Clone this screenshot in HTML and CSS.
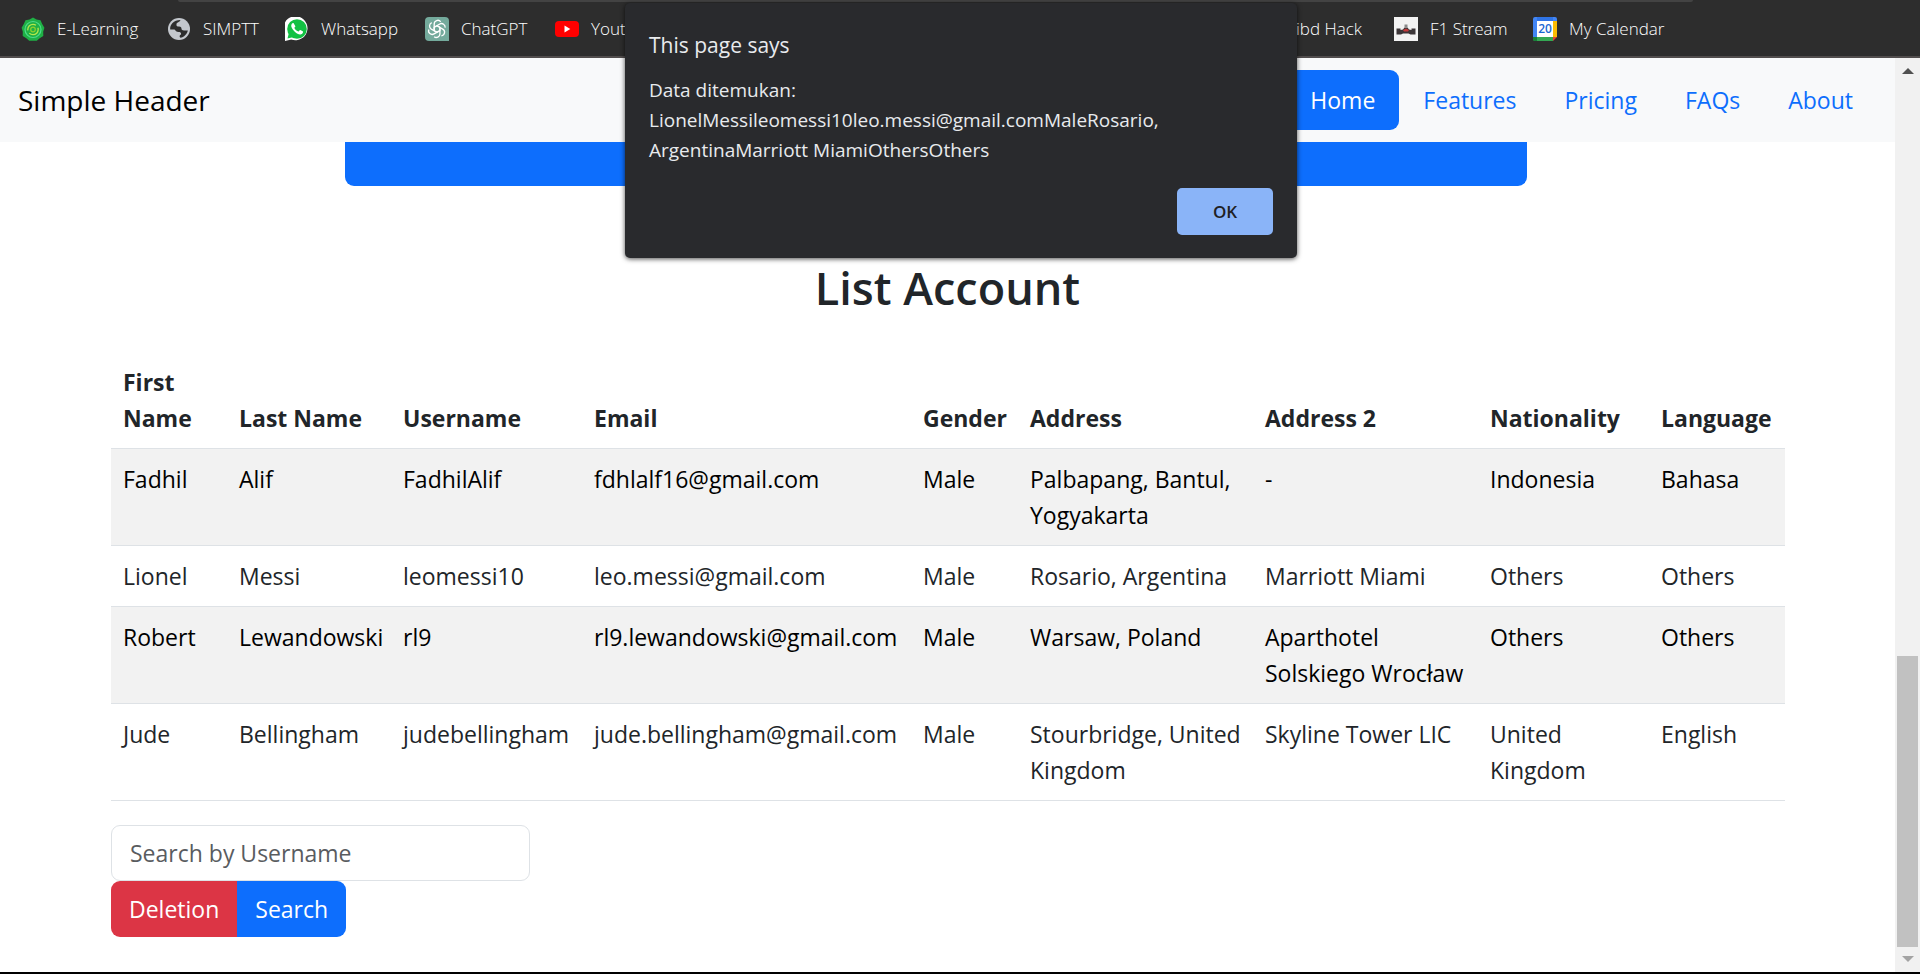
FILE: index.html
```html
<!DOCTYPE html>
<html lang="en">
<head>
<meta charset="utf-8">
<meta name="viewport" content="width=device-width, initial-scale=1">
<title>List Account</title>
<link rel="stylesheet" href="styles.css">
</head>
<body>
<div class="browser">
  <div class="address-edge"></div>
  <nav class="bookmarks" aria-label="Bookmarks">
    <a class="bookmark" href="#">
      <svg class="bookmark-icon" viewBox="0 0 24 24" aria-hidden="true">
        <path d="M12 0.500l3.500 2 4 .8 1.700 3.800 2.200 3.600-1.200 4 .1 4.200-3.600 2.300-2.900 2.600H8.200l-2.900-2.600-3.600-2.300.1-4.200-1.200-4 2.200-3.600 1.700-3.800 4-.8z" fill="#1fb045"/>
        <circle cx="12" cy="12.500" r="8" fill="none" stroke="#4ddc8a" stroke-width="1.200"/>
        <circle cx="12" cy="12.500" r="5.200" fill="none" stroke="#b5e84a" stroke-width="1.300" stroke-dasharray="12 3"/>
        <circle cx="12" cy="12.500" r="2.300" fill="none" stroke="#8ccf2c" stroke-width="1.200"/>
      </svg>
      <span>E-Learning</span>
    </a>
    <a class="bookmark" href="#">
      <svg class="bookmark-icon" viewBox="0 0 24 24" aria-hidden="true">
        <circle cx="12" cy="12" r="11" fill="#c3c7cd"/>
        <path d="M13.500 3c-1 2.500-3.500 2-4 4-.4 2 .5 2.500 2.500 2.500s2.500 1 2.500 2.500 2 1.500 4 1.500h2.300c-.8 3.800-3.800 6.700-7.300 7.300-1.500-.8-1-2.800.5-3.300.5-2-1-2.500-2.500-2.500-2 0-3-1.500-4-2.500H3.200C2.700 8 6.500 3 13.500 3z" fill="#2d2d2d"/>
      </svg>
      <span>SIMPTT</span>
    </a>
    <a class="bookmark" href="#">
      <svg class="bookmark-icon" viewBox="0 0 24 24" aria-hidden="true">
        <path d="M0 24V17A12 12 0 1 1 6.200 22.400z" fill="#fff"/>
        <circle cx="12" cy="12" r="9.800" fill="#12c143"/>
        <path d="M2.500 21.500l1.300-5.200 3.800 3.900z" fill="#12c143"/>
        <path d="M8.800 6.400c-.3-.6-1.300-.5-1.800.1-1.500 1.700-.7 4 1 6.200 2 2.600 4.300 4.300 6.900 4.700 1.500.2 3.200-.9 3.200-2.700 0-.4-2.700-1.700-3-1.600-.7.200-1 1.500-1.500 1.500-1.700-.4-3.500-2-4.200-3.600 0-.6 1-1.100 1-1.700z" fill="#fff"/>
      </svg>
      <span>Whatsapp</span>
    </a>
    <a class="bookmark" href="#">
      <svg class="bookmark-icon" viewBox="0 0 24 24" aria-hidden="true">
        <path d="M4 0h16a4 4 0 0 1 4 4v20H4a4 4 0 0 1-4-4V4a4 4 0 0 1 4-4z" fill="#74aa9c"/>
        <g fill="none" stroke="#fff" stroke-width="1.300" stroke-linejoin="round">
          <g id="knot">
            <path d="M9.200 13.600V7a3.600 3.600 0 0 1 6.500-2.200"/>
            <path d="M9.200 10.300l5.600-3.300a3.600 3.600 0 0 1 5.300 3.600"/>
          </g>
          <use href="#knot" transform="rotate(120 12 12)"/>
          <use href="#knot" transform="rotate(240 12 12)"/>
          <path d="M12 8.700l2.900 1.600v3.400L12 15.300l-2.900-1.600v-3.400z"/>
        </g>
      </svg>
      <span>ChatGPT</span>
    </a>
    <a class="bookmark" href="#">
      <svg class="bookmark-icon" viewBox="0 0 24 24" aria-hidden="true">
        <rect x="0" y="4" width="24" height="16" rx="4" fill="#f00"/>
        <path d="M9.500 8.500v7l5.800-3.500z" fill="#fff"/>
      </svg>
      <span>Youtube</span>
    </a>
    <a class="bookmark" href="#">
      <svg class="bookmark-icon" viewBox="0 0 24 24" aria-hidden="true"><rect width="24" height="24" fill="#1e7b85"/></svg>
      <span>Scribd Hack</span>
    </a>
    <a class="bookmark" href="#">
      <svg class="bookmark-icon" viewBox="0 0 24 24" aria-hidden="true">
        <rect width="24" height="24" fill="#f3f3f3"/>
        <path d="M2.500 11.500h4v1.500l2.500-.5 1.500-2h3l1.500 2 2.500.5v-1.500h4v6h-5l-2-1H9l-2 1H2.500z" fill="#3c3638"/>
        <rect x="10.500" y="7.500" width="3" height="3" fill="#8a8a8a"/>
        <path d="M9 13l3-1.500 3 1.500-1 1.500h-4z" fill="#c4393b"/>
      </svg>
      <span>F1 Stream</span>
    </a>
    <a class="bookmark" href="#">
      <svg class="bookmark-icon" viewBox="0 0 24 24" aria-hidden="true">
        <path d="M2 0h20a2 2 0 0 1 2 2v3H4v15H0V2a2 2 0 0 1 2-2z" fill="#4285f4"/>
        <path d="M4 0h16v4H4z" fill="#2f74e6"/>
        <path d="M20 4h4v16h-4z" fill="#fbbc04"/>
        <path d="M0 20h20v4H2a2 2 0 0 1-2-2z" fill="#34a853"/>
        <path d="M0 20h4v4H2a2 2 0 0 1-2-2z" fill="#188038"/>
        <path d="M20 20h4l-4 4z" fill="#ea4335"/>
        <rect x="4" y="4" width="16" height="16" fill="#fff"/>
        <text class="calendar-day" x="12" y="16" text-anchor="middle">20</text>
      </svg>
      <span>My Calendar</span>
    </a>
  </nav>

  <div class="viewport">
    <div class="page">
      <header class="site-header">
        <a class="brand" href="#">Simple Header</a>
        <nav class="site-nav" aria-label="Main">
          <a class="nav-link active" href="#" aria-current="page">Home</a>
          <a class="nav-link" href="#">Features</a>
          <a class="nav-link" href="#">Pricing</a>
          <a class="nav-link" href="#">FAQs</a>
          <a class="nav-link" href="#">About</a>
        </nav>
      </header>
      <main>
        <div class="form-footer">
          <button class="submit" type="submit" aria-label="Submit form"></button>
        </div>
        <h1 class="title">List Account</h1>
        <div class="content">
          <table class="accounts">
            <colgroup>
              <col class="col-first"><col class="col-last"><col class="col-user"><col class="col-email"><col class="col-gender"><col class="col-address"><col class="col-address2"><col class="col-nation"><col class="col-language">
            </colgroup>
            <thead>
              <tr><th scope="col">First Name</th><th scope="col">Last Name</th><th scope="col">Username</th><th scope="col">Email</th><th scope="col">Gender</th><th scope="col">Address</th><th scope="col">Address 2</th><th scope="col">Nationality</th><th scope="col">Language</th></tr>
            </thead>
            <tbody>
              <tr><td>Fadhil</td><td>Alif</td><td>FadhilAlif</td><td>fdhlalf16@gmail.com</td><td>Male</td><td>Palbapang, Bantul, Yogyakarta</td><td>-</td><td>Indonesia</td><td>Bahasa</td></tr>
              <tr><td>Lionel</td><td>Messi</td><td>leomessi10</td><td>leo.messi@gmail.com</td><td>Male</td><td>Rosario, Argentina</td><td>Marriott Miami</td><td>Others</td><td>Others</td></tr>
              <tr><td>Robert</td><td>Lewandowski</td><td>rl9</td><td>rl9.lewandowski@gmail.com</td><td>Male</td><td>Warsaw, Poland</td><td>Aparthotel Solskiego Wrocław</td><td>Others</td><td>Others</td></tr>
              <tr><td>Jude</td><td>Bellingham</td><td>judebellingham</td><td>jude.bellingham@gmail.com</td><td>Male</td><td>Stourbridge, United Kingdom</td><td>Skyline Tower LIC</td><td>United Kingdom</td><td>English</td></tr>
            </tbody>
          </table>
          <form class="search">
            <input class="search-input" type="text" placeholder="Search by Username" aria-label="Search by Username">
            <div class="button-group">
              <button class="btn btn-danger" type="button">Deletion</button><button class="btn btn-primary" type="button">Search</button>
            </div>
          </form>
        </div>
      </main>
    </div>
    <div class="scrollbar" aria-hidden="true">
      <svg class="scroll-arrow" viewBox="0 0 12 6"><path d="M0 6l6-6 6 6z" fill="#505050"/></svg>
      <div class="scroll-track"><div class="scroll-thumb"></div></div>
      <svg class="scroll-arrow" viewBox="0 0 12 6"><path d="M0 0l6 6 6-6z" fill="#a3a3a3"/></svg>
    </div>
  </div>

  <div class="dialog" role="alertdialog" aria-labelledby="dialog-title" aria-describedby="dialog-text">
    <h2 class="dialog-title" id="dialog-title">This page says</h2>
    <p class="dialog-text" id="dialog-text">Data ditemukan:<br>LionelMessileomessi10leo.messi@gmail.comMaleRosario, ArgentinaMarriott MiamiOthersOthers</p>
    <button class="dialog-ok" type="button">OK</button>
  </div>
</div>
</body>
</html>
```
FILE: styles.css
```css
* {
  box-sizing: border-box;
}

body {
  margin: 0;
  background: #fff;
  color: #212529;
  font-family: "Open Sans", "Noto Sans", sans-serif;
  font-size: 23px;
  line-height: 36px;
}

a {
  color: inherit;
  text-decoration: none;
}

button,
input {
  font: inherit;
}

.browser {
  position: relative;
  display: flex;
  flex-direction: column;
  min-height: 100vh;
  background: #2d2d2d;
  border-bottom: 2px solid #000;
}

.address-edge {
  height: 2px;
  margin: 0 227px 0 178px;
  background: #434343;
  border-radius: 0 0 8px 8px;
}

.bookmarks {
  display: grid;
  grid-template-columns: 146px 118px 140px 130px 681px 158px 139px 1fr;
  align-items: center;
  height: 56px;
  padding-left: 21px;
  border-bottom: 2px solid #514d4d;
  color: #fff;
  font-size: 17px;
  font-weight: 300;
  line-height: 24px;
}

.bookmark {
  display: flex;
  gap: 12px;
  align-items: center;
  white-space: nowrap;
}

.bookmark-icon {
  flex: none;
  width: 24px;
  height: 24px;
}

.calendar-day {
  fill: #1a67d2;
  font: 600 12px "Open Sans", sans-serif;
}

.viewport {
  display: flex;
  flex: 1;
  background: #fff;
}

.page {
  flex: 1;
  min-width: 0;
}

.site-header {
  display: flex;
  align-items: center;
  justify-content: space-between;
  padding: 12px 18px;
  background: #f8f9fa;
}

.brand {
  color: #000;
  font-size: 28px;
}

.site-nav {
  display: flex;
}

.nav-link {
  padding: 12px 24px;
  border-radius: 9px;
  color: #0d6efd;
}

.nav-link.active {
  background: #0d6efd;
  color: #fff;
}

.form-footer {
  padding: 0 368px 0 345px;
}

.submit {
  display: block;
  width: 100%;
  height: 44px;
  border: 0;
  border-radius: 0 0 9px 9px;
  background: #0d6efd;
}

.title {
  margin: 73px 0 35px;
  font-size: 45px;
  font-weight: 600;
  line-height: 58px;
  text-align: center;
}

.content {
  padding: 0 110px 34px 111px;
}

.accounts {
  width: 100%;
  border-collapse: separate;
  border-spacing: 0;
  table-layout: fixed;
}

.accounts th,
.accounts td {
  padding: 12px;
  border-bottom: 1px solid #dee2e6;
  text-align: left;
  vertical-align: top;
}

.accounts th {
  vertical-align: bottom;
}

.accounts tbody tr:nth-child(odd) {
  background: #f2f2f2;
  color: #000;
}

.col-first { width: 116px; }
.col-last { width: 164px; }
.col-user { width: 191px; }
.col-email { width: 329px; }
.col-gender { width: 107px; }
.col-address { width: 235px; }
.col-address2 { width: 225px; }
.col-nation { width: 171px; }
.col-language { width: 136px; }

.search {
  margin-top: 24px;
}

.search-input {
  display: block;
  width: 25%;
  height: 56px;
  padding: 8px 18px;
  border: 1px solid #dee2e6;
  border-radius: 9px;
  background: #fff;
  color: #212529;
}

.search-input::placeholder {
  color: #595c5f;
  opacity: 1;
}

.button-group {
  display: flex;
}

.btn {
  padding: 10px 18px;
  border: 0;
  color: #fff;
}

.btn-danger {
  border-radius: 9px 0 0 9px;
  background: #dc3545;
}

.btn-primary {
  border-radius: 0 9px 9px 0;
  background: #0d6efd;
}

.scrollbar {
  display: flex;
  flex-direction: column;
  align-items: center;
  width: 25px;
  padding: 10px 2px;
  background: #f1f1f1;
}

.scroll-arrow {
  width: 12px;
  height: 6px;
}

.scroll-track {
  display: flex;
  flex: 1;
  flex-direction: column;
  justify-content: flex-end;
  width: 100%;
  padding: 9px 0;
}

.scroll-thumb {
  height: 291px;
  background: #c1c1c1;
}

.dialog {
  position: absolute;
  top: 3px;
  left: 50%;
  display: flex;
  flex-direction: column;
  width: 672px;
  margin-left: -335px;
  padding: 26px 24px 23px;
  border-radius: 5px;
  background: #292a2d;
  box-shadow: 0 1px 5px rgba(0, 0, 0, 0.7);
  color: #e8eaed;
}

.dialog-title {
  margin: 0 0 14px;
  font-size: 21px;
  font-weight: 400;
  line-height: 32px;
}

.dialog-text {
  width: 530px;
  margin: 0;
  font-size: 19px;
  line-height: 30px;
}

.dialog-ok {
  align-self: flex-end;
  width: 96px;
  height: 47px;
  margin-top: 23px;
  border: 0;
  border-radius: 5px;
  background: #8ab4f8;
  color: #202124;
  font-size: 17px;
  font-weight: 600;
  line-height: 24px;
}
```
